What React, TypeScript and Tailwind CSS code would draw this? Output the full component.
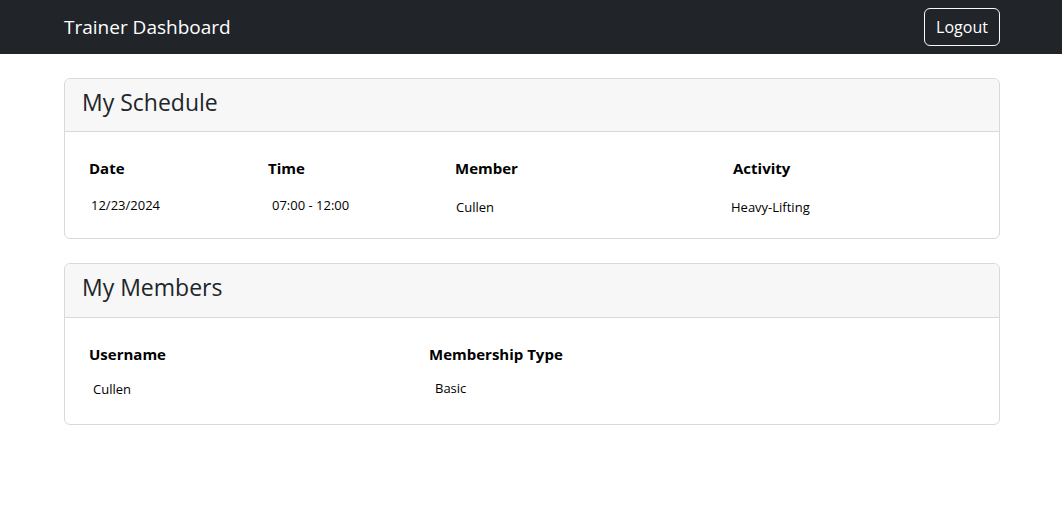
import React from 'react'

const font = { fontFamily: '"Segoe UI", "Open Sans", "Noto Sans", sans-serif' }

function Card({ title, children, head, body }: { title: string; children: React.ReactNode; head: string; body: string }) {
  return (
    <div className="rounded-[6px] border border-[#d9d9d9] bg-white">
      <div className={`${head} border-b border-[#d9d9d9] bg-[#f7f7f7] px-[17px] flex items-center rounded-t-[6px]`}>
        <h3 className="text-[23px] leading-none text-[#212529] pb-[6px]">{title}</h3>
      </div>
      <div className={`px-[16px] ${body}`}>{children}</div>
    </div>
  )
}

export default function App() {
  return (
    <div className="min-h-[514px] bg-white text-black" style={font}>
      {/* navbar */}
      <nav className="h-[54px] bg-[#212529]">
        <div className="ml-[64px] w-[936px] h-full flex items-center justify-between">
          <span className="text-[19px] text-white">Trainer Dashboard</span>
          <button className="h-[38px] w-[76px] rounded-[6px] border border-[#f8f9fa] text-[16px] text-white">
            Logout
          </button>
        </div>
      </nav>

      <main className="ml-[64px] w-[936px] pt-[24px] flex flex-col gap-[24px]">
        <Card title="My Schedule" head="h-[53px]" body="pt-[24px] pb-[20px]">
          <div className="grid grid-cols-[179px_187px_278px_1fr]">
            <div className="pl-[8px] text-[15px] font-bold h-[24px] flex items-center">Date</div>
            <div className="pl-[8px] text-[15px] font-bold h-[24px] flex items-center">Time</div>
            <div className="pl-[8px] text-[15px] font-bold h-[24px] flex items-center">Member</div>
            <div className="pl-[8px] text-[15px] font-bold h-[24px] flex items-center">Activity</div>
            <div className="pl-[10px] text-[13px] pt-[16px]">12/23/2024</div>
            <div className="pl-[12px] text-[13px] pt-[16px]">07:00 - 12:00</div>
            <div className="pl-[9px] text-[13px] pt-[18px]">Cullen</div>
            <div className="pl-[6px] text-[13px] pt-[18px]">Heavy-Lifting</div>
          </div>
        </Card>

        <Card title="My Members" head="h-[54px]" body="pt-[25px] pb-[25px]">
          <div className="grid grid-cols-[340px_1fr]">
            <div className="pl-[8px] text-[15px] font-bold h-[24px] flex items-center">Username</div>
            <div className="pl-[8px] text-[15px] font-bold h-[24px] flex items-center">Membership Type</div>
            <div className="pl-[12px] text-[13px] pt-[13px]">Cullen</div>
            <div className="pl-[14px] text-[13px] pt-[12px]">Basic</div>
          </div>
        </Card>
      </main>
    </div>
  )
}
